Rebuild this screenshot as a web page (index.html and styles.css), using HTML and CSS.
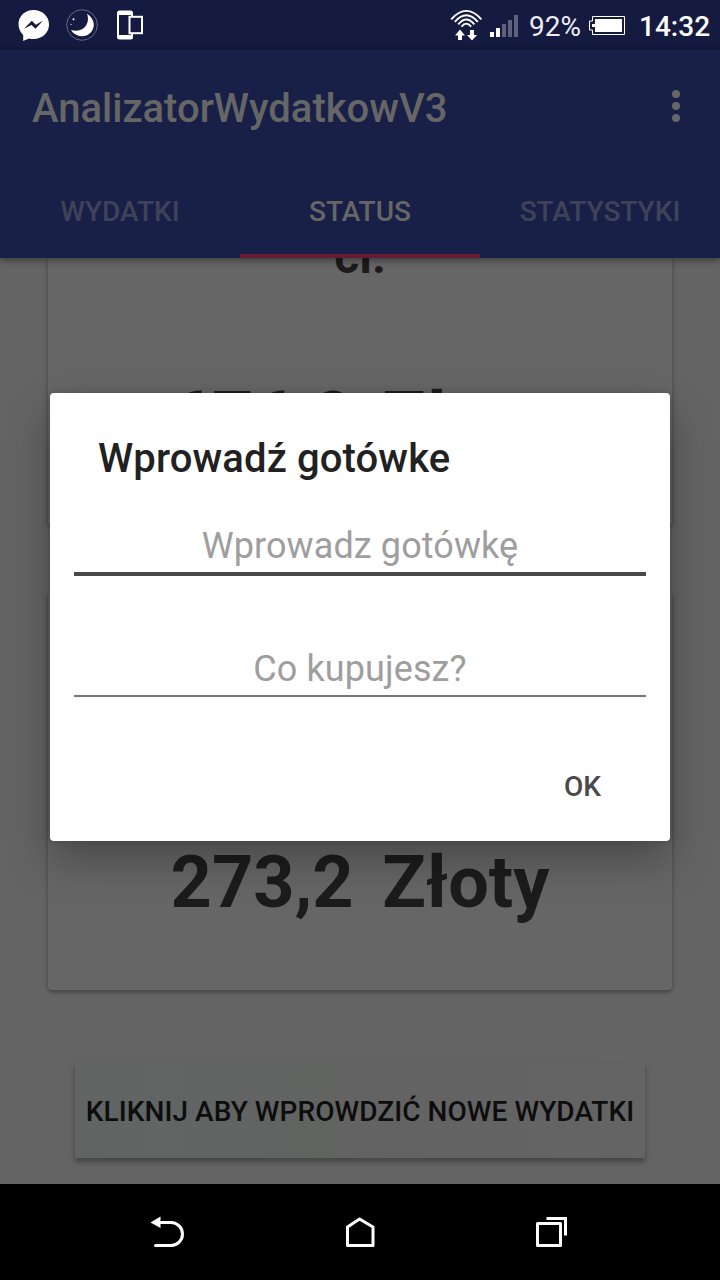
FILE: index.html
```html
<!DOCTYPE html>
<html lang="pl">
<head>
<meta charset="utf-8">
<title>AnalizatorWydatkowV3</title>
<link rel="stylesheet" href="styles.css">
</head>
<body>
<div class="phone">
  <header class="status-bar">
    <div class="notifications">
      <svg width="180" height="50" viewBox="0 0 180 50">
        <path d="M33.500 10C25 10 18.500 16.300 18.500 24c0 4.300 1.800 8.200 4.700 11v6l5.700-2.600c1.500.4 3 .6 4.600.6C42.500 39 49 32.500 49 24.500S42.500 10 33.500 10z" fill="#fff"/>
        <path d="M24 28.700 31.800 20.800 35.800 24.700 43 20.800 35.500 28.700 31.500 24.900z" fill="#151a40"/>
        <circle cx="82" cy="25" r="15.300" fill="none" stroke="#666982" stroke-width="1"/>
        <path d="M87 13.500C92 17 94.500 22 93.700 26.500 92.500 32.500 87.500 36.500 82 36.300 77 36 73 33.500 71 30 76 31.700 81.500 30.700 84.700 27.300 88.300 23.500 88.700 18.500 87 13.500z" fill="#fff"/>
        <circle cx="73.500" cy="19.200" r="1" fill="#fff"/><circle cx="71" cy="24.500" r=".7" fill="#b9bac6"/>
        <rect x="117" y="10.500" width="16" height="29" rx="2.500" fill="#fff"/>
        <rect x="119" y="15" width="12" height="20" fill="#151a40"/>
        <rect x="129.500" y="16.800" width="12.500" height="16.400" fill="#151a40" stroke="#fff" stroke-width="2"/>
      </svg>
    </div>
    <div class="system">
      <svg width="79" height="50" viewBox="0 0 79 50">
        <g fill="none" stroke="#fff" stroke-width="1.900">
          <path d="M1.200 19.300Q16.300 2.500 31.400 19.300"/>
          <path d="M4.800 21.900Q16.300 8.500 27.800 21.900"/>
          <path d="M8.300 24.400Q16.300 14.700 24.300 24.400"/>
          <path d="M11.500 26.700Q16.300 20.500 21.100 26.700"/>
        </g>
        <path d="M10 29.500 15 35.500H12V40H8V35.500H5zM22 40.500 17 35H20V30H24V35H27z" fill="#fff"/>
        <path d="M40 32h4v5h-4zM46 28h4v9h-4z" fill="#fff"/>
        <path d="M52 24h4v13h-4zM58 20h4v17h-4zM64 15h4v22h-4z" fill="#5f617c"/>
      </svg>
      <span class="percent">92%</span>
      <svg class="battery" width="36" height="50" viewBox="0 0 36 50">
        <path d="M3.500 16.500h32v18h-32v-4.500h-3v-9h3z" fill="none" stroke="#fff" stroke-width="1"/>
        <path d="M6 19h27v13H6v-5H3v-3h3z" fill="#fff"/>
      </svg>
      <span class="clock">14:32</span>
    </div>
  </header>

  <div class="app-bar">
    <div class="toolbar">
      <h1 class="app-title">AnalizatorWydatkowV3</h1>
      <svg width="8" height="32" viewBox="0 0 8 32" fill="#666"><circle cx="4" cy="4" r="4"/><circle cx="4" cy="16" r="4"/><circle cx="4" cy="28" r="4"/></svg>
    </div>
    <nav class="tabs">
      <span class="tab">WYDATKI</span>
      <span class="tab active">STATUS</span>
      <span class="tab">STATYSTYKI</span>
    </nav>
  </div>

  <main class="content">
    <section class="card first">
      <p class="card-label">ci.</p>
      <p class="amount">676,8  Złoty</p>
    </section>
    <section class="card second">
      <p class="amount">273,2  Złoty</p>
    </section>
    <div class="add-button">KLIKNIJ ABY WPROWDZIĆ NOWE WYDATKI</div>
  </main>

  <footer class="nav-bar">
    <svg width="36" height="36" viewBox="0 0 36 36"><path d="M9 9.500h15a11.400 11.400 0 0 1 0 23H8.500" transform="translate(-3 -2)" fill="none" stroke="#fff" stroke-width="3" stroke-linecap="round"/><path d="M.5 7.500 10.500 1.500V13z" fill="#fff"/></svg>
    <svg width="36" height="36" viewBox="0 0 36 36"><path d="M5.500 30.500V12L17.500 4 31 12V30.500z" fill="none" stroke="#fff" stroke-width="3" stroke-linejoin="round"/></svg>
    <svg width="36" height="36" viewBox="0 0 36 36"><path d="M3.500 8.500h23v22h-23z" fill="none" stroke="#fff" stroke-width="3" stroke-linejoin="round"/><path d="M12.500 3.500h19v17" fill="none" stroke="#fff" stroke-width="3"/></svg>
  </footer>

  <div class="dialog">
    <h2 class="dialog-title">Wprowadź gotówke</h2>
    <div class="field focused">Wprowadz gotówkę</div>
    <div class="field">Co kupujesz?</div>
    <div class="actions"><span class="ok">OK</span></div>
  </div>
</div>
</body>
</html>
```
FILE: styles.css
```css
* { box-sizing: border-box; }
body { margin: 0; font-family: Roboto, "Noto Sans", sans-serif; }
h1, h2, p { margin: 0; }
svg { display: block; flex: none; }

.phone {
  position: relative;
  display: flex;
  flex-direction: column;
  width: 720px;
  height: 1280px;
  overflow: hidden;
  background: #646464;
}

.status-bar {
  flex: none;
  display: flex;
  justify-content: space-between;
  height: 50px;
  background: #151a40;
  color: #fff;
}
.system { display: flex; padding-right: 10px; }
.percent, .clock { line-height: 54px; font-size: 28px; white-space: nowrap; }
.percent { width: 60px; color: #eeeef2; }
.clock { width: 71px; margin-left: 14px; font-weight: 500; text-align: right; }

.app-bar {
  flex: none;
  height: 208px;
  background: #192048;
  box-shadow: 0 2px 8px rgba(0, 0, 0, .45);
  z-index: 1;
}
.toolbar {
  display: flex;
  align-items: center;
  justify-content: space-between;
  height: 112px;
  padding: 0 40px 0 32px;
}
.app-title { padding-top: 6px; font-size: 40px; font-weight: 500; line-height: 48px; color: #666; }
.tabs { display: flex; height: 96px; }
.tab {
  flex: 1;
  border-bottom: 4px solid transparent;
  text-align: center;
  font-size: 28px;
  font-weight: 500;
  line-height: 100px;
  color: #3f4359;
}
.tab.active { border-color: #671a35; color: #666; }

.content {
  flex: 1;
  display: flex;
  flex-direction: column;
  align-items: center;
  min-height: 0;
  overflow: hidden;
}
.card {
  flex: none;
  width: 624px;
  border-radius: 4px;
  background: #666;
  box-shadow: 0 2px 4px rgba(0, 0, 0, .35);
  text-align: center;
  color: #1c1c1c;
}
.card.first { height: 267px; border-radius: 0 0 4px 4px; }
.card-label { margin-top: -29px; height: 148px; font-size: 48px; font-weight: 700; line-height: 56px; }
.amount { font-size: 72px; font-weight: 700; line-height: 84px; white-space: pre; word-spacing: -3.5px; }
.card.second { height: 398px; margin-top: 67px; padding-top: 249px; }
.add-button {
  flex: none;
  width: 570px;
  height: 96px;
  margin-top: 72px;
  background: linear-gradient(90deg, #606564, #626462 45%, #636363 50%, #646464);
  box-shadow: 0 4px 5px rgba(0, 0, 0, .3);
  text-align: center;
  font-size: 28px;
  font-weight: 500;
  line-height: 100px;
  letter-spacing: .06px;
  color: #0d0d0d;
  white-space: nowrap;
}

.nav-bar {
  flex: none;
  display: flex;
  justify-content: space-between;
  height: 96px;
  padding: 31px 150px 0;
  background: #000;
}

.dialog {
  position: absolute;
  z-index: 2;
  left: 50px;
  top: 393px;
  width: 620px;
  height: 448px;
  padding: 42px 24px 0;
  border-radius: 4px;
  background: #fff;
  box-shadow: 0 20px 44px rgba(0, 0, 0, .28), 0 0 8px rgba(0, 0, 0, .15);
}
.dialog-title { padding-left: 24px; font-size: 40px; font-weight: 500; line-height: 47px; letter-spacing: .12px; color: #212121; }
.field {
  height: 121px;
  padding-top: 72px;
  border-bottom: 2px solid #777;
  text-align: center;
  font-size: 36px;
  line-height: 42px;
  letter-spacing: .1px;
  color: #9e9e9e;
}
.field.focused { height: 94px; padding-top: 43px; border-bottom: 4px solid #4a484a; }
.actions { display: flex; justify-content: flex-end; padding: 73px 45px 0 0; }
.ok { font-size: 28px; font-weight: 500; line-height: 34px; color: #4a484a; }
```
